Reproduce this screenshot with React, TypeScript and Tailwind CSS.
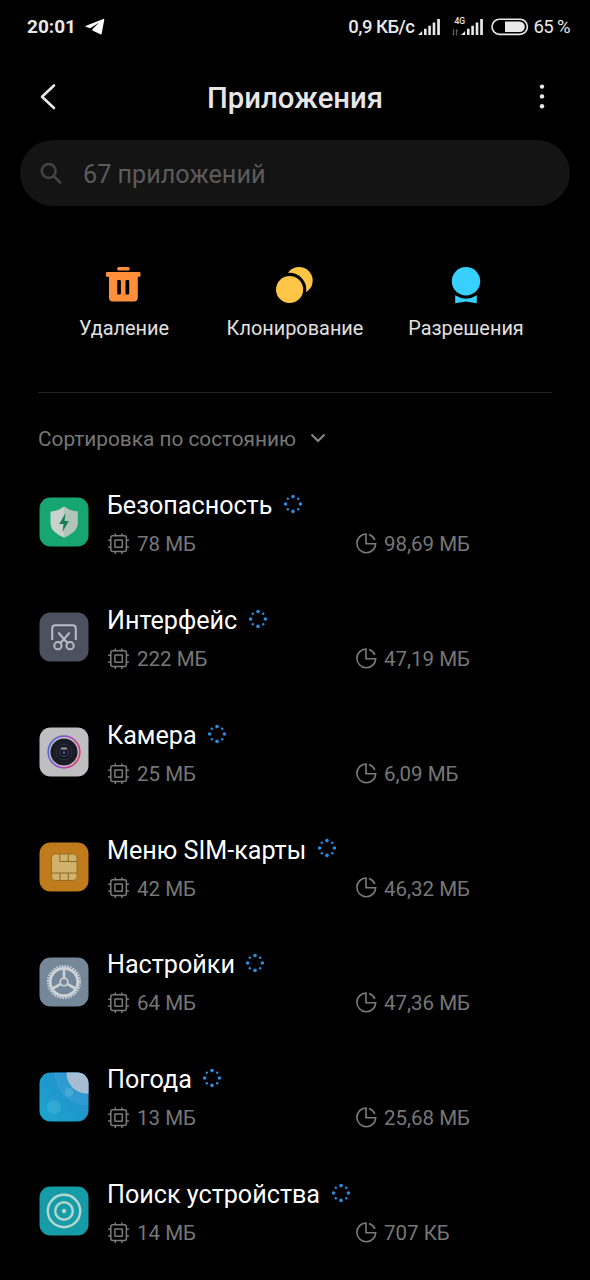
import type { ReactNode } from "react"

type AppItem = {
  name: string
  memory: string
  storage: string
  icon: ReactNode
}

function Telegram() {
  return (
    <svg width="20" height="18" viewBox="0 0 20 18" fill="#fff">
      <path d="M18.2.9 1.1 7.7c-.9.4-.8.9 0 1.2l4.1 1.4L14.3 4.5 7.5 11l-.1 1.4 7.9 3.9c.7.3 1.2 0 1.4-.8L19.2 2c.2-1-.2-1.5-1-1.1z" />
    </svg>
  )
}

function Signal() {
  return (
    <svg width="23" height="18" viewBox="0 0 23 18" fill="#e8e8e8">
      <path d="M0 17l4.2-4v4z" />
      <path d="M6 10.7h2.6V17H6zM10.3 7.8h2.6V17h-2.6zM14.7 4.5h2.6V17h-2.6zM19.2 1h2.7v16h-2.7z" />
    </svg>
  )
}

function Battery() {
  return (
    <svg width="38" height="18" viewBox="0 0 38 18" fill="none">
      <rect x="1" y="1.2" width="35.4" height="15.2" rx="7.6" stroke="#e8e8e8" strokeWidth="1.6" />
      <path d="M14 3.6h14.6a5.2 5.2 0 0 1 0 10.4H14z" fill="#e8e8e8" />
    </svg>
  )
}

function StatusBar() {
  return (
    <div className="flex h-[53px] items-center pt-px pl-[27px] pr-[20px] text-[#e8e8e8]">
      <span className="w-[58px] pt-px text-[19px] font-bold">20:01</span>
      <Telegram />
      <div className="ml-auto flex items-center">
        <span className="mr-[4px] pt-px text-[18.5px] font-medium tracking-[-0.5px]">0,9 КБ/с</span>
        <Signal />
        <div className="ml-[11px] flex h-[18px] w-[9px] flex-col justify-between">
          <span className="pl-[2px] text-[8.5px] leading-[7px] font-medium">4G</span>
          <svg width="6" height="8" viewBox="0 0 6 8" fill="none" stroke="#777" strokeWidth=".9">
            <path d="M1.6 1v6L.3 5.6M4.4 7.5v-6L5.7 3" />
          </svg>
        </div>
        <Signal />
        <div className="ml-[7px] mr-[4px]">
          <Battery />
        </div>
        <span className="pt-px text-[18.5px] tracking-[-0.6px]">65 %</span>
      </div>
    </div>
  )
}

function Header() {
  return (
    <header className="flex h-[87px] items-center justify-between px-[38px]">
      <svg width="20" height="28" viewBox="0 0 20 28" fill="none" stroke="#e8e8e8" strokeWidth="2.6">
        <path d="M16 2.5 4 13.8 16 25" strokeLinecap="round" strokeLinejoin="round" />
      </svg>
      <h1 className="pt-[4px] text-[29.3px] leading-none font-medium text-[#e6e6e6]">Приложения</h1>
      <svg width="20" height="28" viewBox="0 0 20 28" fill="#e8e8e8">
        <circle cx="10" cy="3.6" r="2.2" />
        <circle cx="10" cy="13.4" r="2.2" />
        <circle cx="10" cy="23.2" r="2.2" />
      </svg>
    </header>
  )
}

function Search() {
  return (
    <div className="mx-5 flex h-[66px] items-center rounded-full bg-[#141414] pl-5">
      <svg width="22" height="22" viewBox="0 0 22 22" fill="none" stroke="#444" strokeWidth="2.5">
        <circle cx="8.7" cy="9" r="6.9" />
        <path d="M13.7 14l6.5 6.5" strokeLinecap="round" />
      </svg>
      <span className="ml-[21px] pt-[3px] text-[25.2px] text-[#5b5b5b]">67 приложений</span>
    </div>
  )
}

function TrashIcon() {
  return (
    <svg width="40" height="40" viewBox="0.8 0 40 40" fill="#ff8f3a">
      <rect x="14" y="2" width="12.4" height="3.4" rx="1.5" />
      <path
        fillRule="evenodd"
        d="M4 7h32q1.3 0 1.3 1.3V11q0 .8-.8.8H34.6V32.5q0 4-4 4H9.8q-4 0-4-4V11.8H3.5q-.8 0-.8-.8V8.3Q2.7 7 4 7zM14 16.3v12q0 1.2 1 1.2h1.7q1 0 1-1.2v-12q0-1.3-1-1.3H15q-1 0-1 1.3zm8.3 0v12q0 1.2 1 1.2H25q1 0 1-1.2v-12q0-1.3-1-1.3h-1.7q-1 0-1 1.3z"
      />
    </svg>
  )
}

function CloneIcon() {
  return (
    <svg width="40" height="40" viewBox="0.6 0 40 40">
      <circle cx="24.7" cy="15.5" r="13.6" fill="#ffc546" />
      <circle cx="15.2" cy="24.5" r="16.7" fill="#000" />
      <circle cx="15.2" cy="24.5" r="13.6" fill="#ffc546" />
    </svg>
  )
}

function PermissionsIcon() {
  return (
    <svg width="40" height="40" viewBox="0 0 40 40" fill="#38d0ff">
      <circle cx="20" cy="16.2" r="14.2" />
      <path d="M9.2 30.2q10.8 7 21.6 0v8l-10.8-1.6-10.8 1.6z" />
    </svg>
  )
}

function Action({ icon, label }: { icon: ReactNode; label: string }) {
  return (
    <div className="flex w-[171px] flex-col items-center">
      {icon}
      <span className="mt-[12px] text-[19.9px] leading-[24px] whitespace-nowrap text-[#e0e0e0]">{label}</span>
    </div>
  )
}

function Spinner() {
  return (
    <svg className="mb-[2px] ml-[10.5px]" width="20" height="20" viewBox="0 0 20 20" fill="#2b8fe0">
      <circle cx="10" cy="2.6" r="1.8" />
      <circle cx="17.4" cy="10" r="1.8" />
      <circle cx="10" cy="17.4" r="1.8" />
      <circle cx="2.6" cy="10" r="1.8" />
      <circle cx="15.2" cy="4.8" r="1.2" />
      <circle cx="15.2" cy="15.2" r="1.2" />
      <circle cx="4.8" cy="15.2" r="1.2" />
      <circle cx="4.8" cy="4.8" r="1.2" />
    </svg>
  )
}

function ChipIcon() {
  return (
    <svg width="22" height="22" viewBox="-0.6 0.4 22 22" fill="none" stroke="#7c7c7c" strokeWidth="1.5">
      <rect x="3.2" y="3.2" width="15.6" height="15.6" rx="2" />
      <rect x="7.3" y="7.3" width="7.4" height="7.4" rx=".5" />
      <path d="M7.7 3V.8M14.3 3V.8M7.7 19v2.3M14.3 19v2.3M3 7.7H.5M3 14.3H.5M19 7.7h2.3M19 14.3h2.3" />
    </svg>
  )
}

function PieIcon() {
  return (
    <svg width="22" height="22" viewBox="-0.7 0.6 22 22" fill="none" stroke="#7c7c7c" strokeWidth="1.6">
      <path d="M10.3 1.6a9.4 9.4 0 1 0 9.7 9.7h-9.7z" />
      <path d="M13.3 2q4.3 1.4 5.9 5.5" />
    </svg>
  )
}

function SecurityIcon() {
  return (
    <svg width="50" height="50" viewBox="0 0 50 50">
      <rect x=".5" y=".5" width="49" height="49" rx="11" fill="#17a673" />
      <path d="M25 9.5c4 3 8.5 4.7 13.5 5v12c0 6-5.5 10.5-13.5 14-8-3.5-13.5-8-13.5-14v-12c5-.3 9.5-2 13.5-5z" fill="#c8d1cd" />
      <path d="M25 9.5c4 3 8.5 4.7 13.5 5v12c0 6-5.5 10.5-13.5 14z" fill="#b3c4bc" />
      <path d="M26.5 16l-6.3 11h4.3l-1 8 6.3-11h-4.3z" fill="#168057" />
    </svg>
  )
}

function ScreenshotIcon() {
  return (
    <svg width="50" height="50" viewBox="0 0 50 50" fill="none" stroke="#b9bcc4" strokeWidth="2">
      <rect x=".5" y=".5" width="49" height="49" rx="11" fill="#4c5160" stroke="none" />
      <path d="M13.2 28V16.5q0-3.3 3.3-3.3h17q3.3 0 3.3 3.3V28" />
      <path d="M19.3 20.5l9.6 11M30.7 20.5l-9.6 11" />
      <circle cx="18.9" cy="33.7" r="3.6" />
      <circle cx="31.1" cy="33.7" r="3.6" />
    </svg>
  )
}

function CameraIcon() {
  return (
    <svg width="50" height="50" viewBox="0 0 50 50">
      <defs>
        <linearGradient id="ring" x1="0" y1=".3" x2="1" y2=".6">
          <stop offset="0" stopColor="#4c66d8" />
          <stop offset=".5" stopColor="#a04fc0" />
          <stop offset="1" stopColor="#dc3b68" />
        </linearGradient>
      </defs>
      <rect x=".5" y=".5" width="49" height="49" rx="11" fill="#bfbfc1" />
      <circle cx="25" cy="25" r="15.8" fill="#c9c6d4" stroke="url(#ring)" strokeWidth="1.7" />
      <circle cx="25" cy="25" r="13.6" fill="#1b1d25" />
      <circle cx="25" cy="25" r="7.5" fill="#11131c" stroke="#303449" />
      <circle cx="25" cy="25" r="4.6" fill="#14161f" stroke="#4a4578" />
      <ellipse cx="25" cy="21.5" rx="3.4" ry="1.3" fill="#8a8a8c" />
      <circle cx="25" cy="25.5" r="1.5" fill="#4c5a80" />
    </svg>
  )
}

function SimIcon() {
  return (
    <svg width="50" height="50" viewBox="0 0 50 50">
      <rect x=".5" y=".5" width="49" height="49" rx="11" fill="#c07c1c" />
      <rect x="12.5" y="12" width="25.5" height="26.5" rx="4" fill="#d0b26d" stroke="#8d681f" strokeWidth=".8" />
      <path d="M20.8 12v7.5h8.5V12M29.3 19.5H38M12.5 31H38M21 31v7.5M29.3 31v7.5" fill="none" stroke="#8d681f" />
    </svg>
  )
}

function GearIcon() {
  return (
    <svg width="50" height="50" viewBox="0 0 50 50" fill="none" stroke="#cdd2d6">
      <rect x=".5" y=".5" width="49" height="49" rx="11" fill="#74889a" stroke="none" />
      <circle cx="25" cy="25" r="15.9" strokeWidth="2.4" strokeDasharray="1.55 1.225" />
      <circle cx="25" cy="25" r="13.7" strokeWidth="2.7" />
      <circle cx="25" cy="25" r="3.8" strokeWidth="1.8" />
      <path d="M25 12v8.8M28.7 27.1l7.6 4.4M21.3 27.1l-7.6 4.4" strokeWidth="2.6" />
    </svg>
  )
}

function WeatherIcon() {
  return (
    <svg width="50" height="50" viewBox="0 0 50 50">
      <defs>
        <clipPath id="weather">
          <rect x=".5" y=".5" width="49" height="49" rx="11" />
        </clipPath>
        <linearGradient id="sky" x1="1" y1="0" x2="0" y2="1">
          <stop offset="0" stopColor="#2389ca" />
          <stop offset="1" stopColor="#1ca7cf" />
        </linearGradient>
      </defs>
      <g clipPath="url(#weather)">
        <rect width="50" height="50" fill="url(#sky)" />
        <circle cx="48" cy="1" r="32.5" fill="#4baadb" fillOpacity=".35" />
        <circle cx="48" cy="1" r="20.5" fill="#a9bdd2" />
        <circle cx="15" cy="35" r="7" fill="#5cc2e0" fillOpacity=".3" />
        <circle cx="30" cy="20.5" r="4.5" fill="#7bc5e4" fillOpacity=".3" />
      </g>
    </svg>
  )
}

function FindIcon() {
  return (
    <svg width="50" height="50" viewBox="0 0 50 50" fill="none" stroke="#b5d6d2">
      <rect x=".5" y=".5" width="49" height="49" rx="11" fill="#159ca6" stroke="none" />
      <circle cx="25" cy="25" r="16.2" strokeWidth="2.4" />
      <circle cx="25" cy="25" r="8.8" strokeWidth="2.4" />
      <circle cx="25" cy="25" r="2.2" fill="#b5d6d2" stroke="none" />
    </svg>
  )
}

const apps: AppItem[] = [
  { name: "Безопасность", memory: "78 МБ", storage: "98,69 МБ", icon: <SecurityIcon /> },
  { name: "Интерфейс", memory: "222 МБ", storage: "47,19 МБ", icon: <ScreenshotIcon /> },
  { name: "Камера", memory: "25 МБ", storage: "6,09 МБ", icon: <CameraIcon /> },
  { name: "Меню SIM-карты", memory: "42 МБ", storage: "46,32 МБ", icon: <SimIcon /> },
  { name: "Настройки", memory: "64 МБ", storage: "47,36 МБ", icon: <GearIcon /> },
  { name: "Погода", memory: "13 МБ", storage: "25,68 МБ", icon: <WeatherIcon /> },
  { name: "Поиск устройства", memory: "14 МБ", storage: "707 КБ", icon: <FindIcon /> },
]

function AppRow({ app }: { app: AppItem }) {
  return (
    <li className="flex h-[114.85px] items-center pl-[39px]">
      {app.icon}
      <div className="mt-1 ml-[18px] flex-1">
        <div className="flex h-[39px] items-center">
          <span className="pt-[2px] text-[25.15px] text-white">{app.name}</span>
          <Spinner />
        </div>
        <div className="flex h-[39px] items-center text-[20.5px] text-[#777]">
          <div className="flex w-[248px] items-center gap-[8px]">
            <ChipIcon />
            <span className="pt-px">{app.memory}</span>
          </div>
          <div className="flex items-center gap-[7px]">
            <PieIcon />
            <span className="pt-px">{app.storage}</span>
          </div>
        </div>
      </div>
    </li>
  )
}

export default function App() {
  return (
    <div className="flex h-[1280px] w-[590px] flex-col overflow-hidden bg-black font-['Roboto',sans-serif]">
      <StatusBar />
      <Header />
      <Search />

      <div className="flex h-[186px] justify-center pt-[59px]">
        <Action icon={<TrashIcon />} label="Удаление" />
        <Action icon={<CloneIcon />} label="Клонирование" />
        <Action icon={<PermissionsIcon />} label="Разрешения" />
      </div>
      <div className="mx-[38px] h-px shrink-0 bg-[#222]" />

      <div className="flex h-[72px] shrink-0 items-center pt-[20px] pl-[38px] text-[20.8px] text-[#777]">
        <span className="pt-[2px]">Сортировка по состоянию</span>
        <svg className="mb-[3px] ml-[14px]" width="16" height="10" viewBox="0 0 16 10" fill="none" stroke="#888" strokeWidth="2">
          <path d="M1.5 1.5 8 8l6.5-6.5" />
        </svg>
      </div>

      <ul>
        {apps.map((app) => (
          <AppRow key={app.name} app={app} />
        ))}
      </ul>
    </div>
  )
}
